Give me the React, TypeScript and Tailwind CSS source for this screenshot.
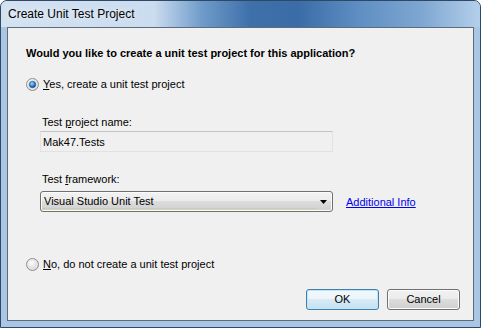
import React from "react";

const RadioMark: React.FC<{checked: boolean}> = ({checked}) => (
  <svg width="13" height="13" viewBox="0 0 13 13" className="shrink-0">
    <defs>
      <radialGradient id={checked ? "rin1" : "rin0"} cx="0.4" cy="0.35" r="0.7">
        <stop offset="0%" stopColor="#ffffff" />
        <stop offset="100%" stopColor="#d0d0d0" />
      </radialGradient>
      <radialGradient id="dot" cx="0.4" cy="0.35" r="0.7">
        <stop offset="0%" stopColor="#a8dcff" />
        <stop offset="60%" stopColor="#2a7fcf" />
        <stop offset="100%" stopColor="#0b3e7a" />
      </radialGradient>
    </defs>
    <circle cx="6.5" cy="6.5" r="6" fill={`url(#${checked ? "rin1" : "rin0"})`} stroke="#8f8f8f" strokeWidth="1" />
    <circle cx="6.5" cy="6.5" r="4.5" fill="none" stroke="#e8e8e8" strokeWidth="1" />
    {checked && <circle cx="6.5" cy="6.5" r="3.2" fill="url(#dot)" stroke="#1d4f86" strokeWidth="0.6" />}
  </svg>
)

const VistaButton: React.FC<{label: string; focused?: boolean}> = ({label, focused}) => (
  <div
    className={
      focused
        ? "w-[73px] h-[21px] rounded-[3px] border border-[#3c7fb1] shadow-[inset_0_0_0_1px_#c4e5f6] bg-[image:linear-gradient(180deg,#f2f8fb_0%,#eaf4fa_50%,#d7ebf5_50%,#c6e1ef_100%)] flex items-center justify-center"
        : "w-[73px] h-[21px] rounded-[3px] border border-[#707070] shadow-[inset_0_0_0_1px_#fbfbfb] bg-[image:linear-gradient(180deg,#f2f2f2_0%,#ebebeb_50%,#dddddd_50%,#cfcfcf_100%)] flex items-center justify-center"
    }
  >
    <span className="text-[11px] leading-[13px] text-black">{label}</span>
  </div>
)

export default function App() {
  return (
    <div
      className="w-[481px] h-[328px] flex flex-col rounded-t-[7px] border border-[#2f4866] bg-[#a9c6e4] overflow-hidden"
      style={{fontFamily: '"Liberation Sans", Arial, sans-serif'}}
    >
      {/* title bar */}
      <div className="h-[26px] shrink-0 flex items-center pl-[7px] bg-[image:linear-gradient(90deg,#d3e2f1_0%,#cadcef_32%,#6f9bca_42%,#3e70aa_52%,#3a6ca7_62%,#5f8fc3_75%,#7fa7d2_88%,#b4cfea_100%)]">
        <span className="text-[12px] leading-[14px] text-black [text-shadow:0_0_6px_white]">
          Create Unit Test Project
        </span>
      </div>

      <div className="flex-1 flex px-[6px] pb-[6px]">
        <div className="flex-1 flex flex-col border border-[#5d6b7b] bg-[#f0f0f0] text-[11px] leading-[14px] text-black pl-[18px] pr-[13px]">
          <div className="mt-[18px] h-[14px] font-bold">
            Would you like to create a unit test project for this application?
          </div>

          <div className="mt-[17px] h-[14px] flex items-center gap-[4px]">
            <RadioMark checked />
            <span><u>Y</u>es, create a unit test project</span>
          </div>

          <div className="pl-[14px] flex flex-col">
            <div className="mt-[24px] h-[14px] pl-[2px]">
              Test <u>p</u>roject name:
            </div>
            <div className="mt-[2px] w-[293px] h-[21px] border border-[#e2e2e2] border-t-[#c4c4c4] flex items-center pl-[2px] pt-[1px]">
              Mak47.Tests
            </div>
            <div className="mt-[20px] h-[14px] pl-[2px]">
              Test <u>f</u>ramework:
            </div>
            <div className="mt-[5px] flex items-center gap-[13px]">
              <div className="w-[293px] h-[21px] rounded-[3px] border border-[#707070] shadow-[inset_0_0_0_1px_#fbfbfb] bg-[image:linear-gradient(180deg,#f2f2f2_0%,#ebebeb_50%,#dddddd_50%,#cfcfcf_100%)] flex items-center p-[2px]">
                <div className="flex-1 h-full flex items-center pl-[1px] border-b border-dotted border-[#c9c98a]">
                  Visual Studio Unit Test
                </div>
                <svg width="7" height="4" viewBox="0 0 7 4" className="mx-[3px]">
                  <polygon points="0,0 7,0 3.5,4" fill="#000" />
                </svg>
              </div>
              <span className="text-[#0000ee] underline">Additional Info</span>
            </div>
          </div>

          <div className="mt-[45px] h-[14px] flex items-center gap-[4px]">
            <RadioMark checked={false} />
            <span><u>N</u>o, do not create a unit test project</span>
          </div>

          <div className="mt-[18px] flex justify-end gap-[8px]">
            <VistaButton label="OK" focused />
            <VistaButton label="Cancel" />
          </div>
        </div>
      </div>
    </div>
  )
}
